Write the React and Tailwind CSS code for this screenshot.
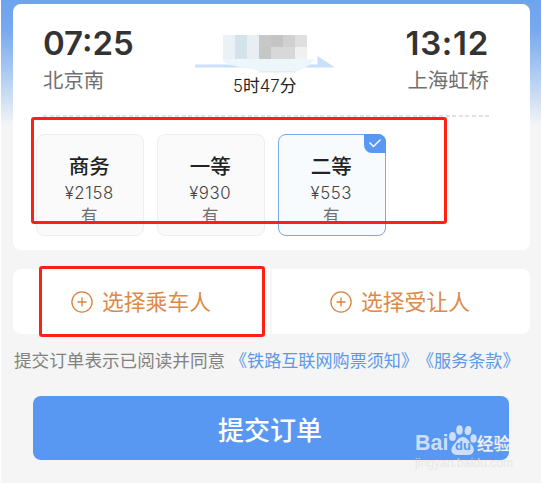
const seats = [
  { name: "商务", price: "¥2158" },
  { name: "一等", price: "¥930" },
  { name: "二等", price: "¥553", active: true },
];

const mosaic = [
  ["bg-[#eaf1f7]", "bg-[#d3e3ea]", "bg-[#e8eef4]", "bg-[#c8c8c9]", "bg-[#c4c4c4]", "bg-[#d0d0d0]", "bg-[#dfdfdf]"],
  ["bg-[#eaf1f7]", "bg-[#d3e3ea]", "bg-[#e8eef4]", "bg-[#c6c8c8]", "bg-[#d8d8d8]", "bg-[#d8d8d8]", "bg-[#f0f0f0]"],
];

function Stop({ time, station, right }) {
  return (
    <div className={right ? "flex w-[92px] flex-col items-end" : "flex w-[92px] flex-col items-start"}>
      <div className={"h-10 whitespace-nowrap font-['Inter'] text-[33px] leading-10 font-semibold text-[#333] " + (right ? "tracking-[0.7px]" : "")}>{time}</div>
      <div className="mt-0.5 h-7 whitespace-nowrap text-[20.4px] leading-7 text-[#707070]">{station}</div>
    </div>
  );
}

function Seat({ name, price, active }) {
  return (
    <div
      className={
        "relative flex h-[102px] w-[107.5px] flex-col items-center rounded-lg border pt-[18px] pr-px " +
        (active ? "border-[#76a9ee] bg-[#f7fbfe]" : "border-[#eeeeee] bg-[#fafafa]")
      }
    >
      <div className="h-6 text-[20.5px] leading-6 font-medium text-[#222]">{name}</div>
      <div className="mt-1.5 h-5 font-['Inter'] text-[16.8px] leading-5 font-light tracking-[0.6px] text-[#444]">{price}</div>
      <div className="mt-0.5 h-5 text-[16.5px] leading-5 text-[#707070]">有</div>
      {active && (
        <div className="absolute -top-px -right-px flex h-[18.5px] w-[21.5px] items-center justify-center rounded-tr-lg rounded-bl-lg bg-[#5897f2]">
          <svg width="14" height="10" viewBox="0 0 14 10" fill="none" stroke="#fff" strokeWidth="1.4">
            <path d="M1.500 4.500 5.500 8.500 12.500 1.500" />
          </svg>
        </div>
      )}
    </div>
  );
}

function Choose({ label }) {
  return (
    <div className="flex h-full items-center">
      <svg width="22" height="22" viewBox="0 0 22 22" fill="none" stroke="#d9813a" strokeWidth="1.3">
        <circle cx="11" cy="11" r="10.1" />
        <path d="M11 6.500v9M6.500 11h9" />
      </svg>
      <span className="-mt-0.5 ml-[9px] h-8 text-[21.8px] leading-8 whitespace-nowrap text-[#dc8a48]">{label}</span>
    </div>
  );
}

export default function App() {
  return (
    <div className="relative h-[483px] w-[542px] overflow-hidden border-x border-white bg-[#f5f5f5] bg-[linear-gradient(to_bottom,#6ea3ee_0px,#78a9ef_30px,#a9c8f2_70px,#f5f5f5_126px)] pt-1 font-['Noto_Sans_CJK_SC',sans-serif]">
      <div className="ml-3 h-[246px] w-[517px] rounded-lg bg-white">
        <div className="flex h-[111px] justify-between pt-[19px] pr-[41px] pl-[30px]">
          <Stop time="07:25" station="北京南" />
          <div className="relative h-20 w-[142px]">
            <svg className="absolute top-0 left-0" width="142" height="52" viewBox="0 0 142 52">
              <path d="M0 41.500h122.500V33L140 44.500H0z" fill="#c8e0fb" />
              <path d="M28 36H120C114 43 108 47 99 49H68C54 45 38 44 28 39z" fill="#edf6fb" />
              <path d="M64 48H100V49.500H64z" fill="#e6ebee" />
            </svg>
            <div className="absolute top-3 left-7 grid grid-cols-7">
              {mosaic.flat().map((c, i) => (
                <div key={i} className={"h-3 w-3 " + c} />
              ))}
            </div>
            <div className="absolute top-[51px] left-[38px] h-6 font-['Inter','Noto_Sans_CJK_SC',sans-serif] text-[16.8px] leading-6 font-light whitespace-nowrap text-[#222]">
              5<span className="font-normal">时</span>47<span className="font-normal">分</span>
            </div>
          </div>
          <Stop time="13:12" station="上海虹桥" right />
        </div>
        <div className="ml-[30px] h-0.5 w-[446px] bg-[repeating-linear-gradient(90deg,#e2e2e2_0px,#e2e2e2_4px,transparent_4px,transparent_6.6px)]" />
        <div className="flex gap-[13.5px] pt-[17px] pl-[23px]">
          {seats.map((s) => (
            <Seat key={s.name} {...s} />
          ))}
        </div>
      </div>

      <div className="mt-[19px] ml-3 flex h-[65px] w-[517px] rounded-lg bg-white">
        <div className="w-[257px] pl-[58px]">
          <Choose label="选择乘车人" />
        </div>
        <div className="w-0.5 bg-[#f7f7f7]" />
        <div className="flex-1 pl-[58px]">
          <Choose label="选择受让人" />
        </div>
      </div>

      <div className="mt-[14px] flex h-6 pl-[13px] text-[17.6px] leading-6 whitespace-nowrap">
        <span className="w-[216px] text-[#828282]">提交订单表示已阅读并同意</span>
        <span className="w-[187px] text-[17.1px] text-[#5c99e8]">《铁路互联网购票须知》</span>
        <span className="text-[17.1px] text-[#5c99e8]">《服务条款》</span>
      </div>

      <button className="mt-[24px] ml-8 block h-16 w-[476px] rounded-lg bg-[#5897f2] pr-0.5 text-[26px] leading-[63px] font-medium text-white">
        提交订单
      </button>

      <div className="absolute top-[117px] left-[30px] h-[107px] w-[416px] rounded-[3px] border-3 border-[#fd2114]" />
      <div className="absolute top-[266px] left-[38px] h-[71px] w-[226px] rounded-[3px] border-3 border-[#fd2114]" />

      <div className="absolute top-[424px] left-[414px] h-[50px] w-[110px] font-['Liberation_Sans','Noto_Sans_CJK_SC',sans-serif] whitespace-nowrap text-white/70">
        <span className="absolute top-[7px] left-0 text-[21.5px] leading-6 font-bold">Bai</span>
        <svg className="absolute top-0 left-[33px]" width="30" height="32" viewBox="0 0 30 32" fill="currentColor">
          <ellipse cx="4.500" cy="12.500" rx="3.400" ry="4.500" />
          <ellipse cx="11.500" cy="6" rx="3.300" ry="4.700" />
          <ellipse cx="20" cy="6.500" rx="3.300" ry="4.500" transform="rotate(12 20 6.500)" />
          <ellipse cx="25.500" cy="14.500" rx="3.200" ry="4.300" />
          <path d="M15 13c4 0 5.500 4 8.500 7.500 5 5.500 1.500 10.500-3.500 10.500H9C3.500 31 1.500 25.500 5.500 21 9.500 17 10 13 15 13z" />
        </svg>
        <span className="absolute top-[14px] left-[40px] text-[13px] leading-4 font-bold text-[#5897f2]">du</span>
        <span className="absolute top-[8px] left-[62px] text-[16.5px] leading-6 font-medium [text-shadow:0_0_1px_#ddd]">经验</span>
        <span className="absolute top-[31px] left-0 text-[12.2px] leading-4 text-[#e4e4e4]/80">jingyan.baidu.com</span>
      </div>
    </div>
  );
}
